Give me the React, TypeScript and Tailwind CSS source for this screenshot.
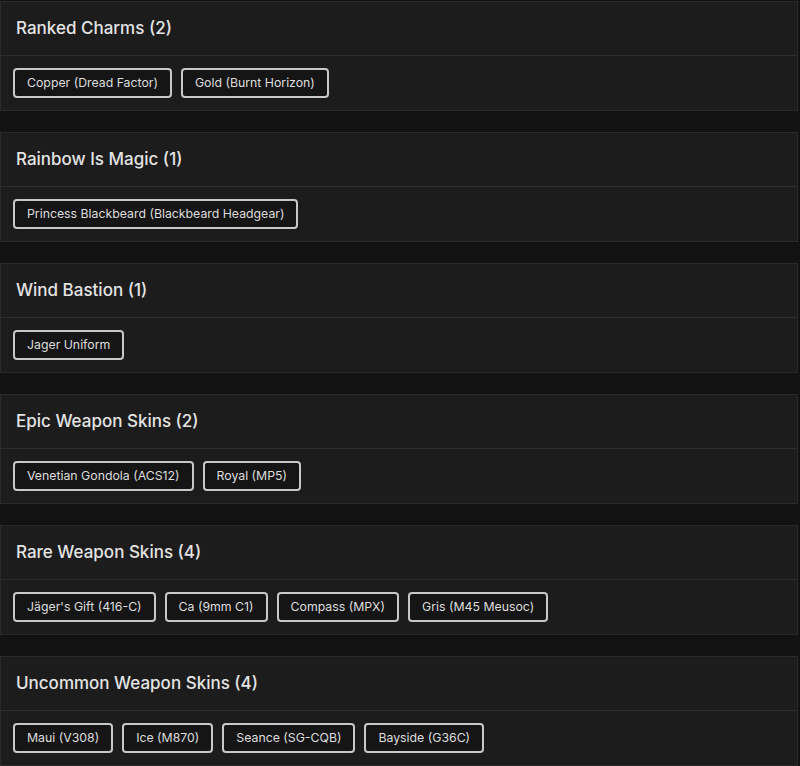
import type { ReactNode } from 'react'

interface Group {
  title: string
  items: string[]
}

const groups: Group[] = [
  { title: 'Ranked Charms', items: ['Copper (Dread Factor)', 'Gold (Burnt Horizon)'] },
  { title: 'Rainbow Is Magic', items: ['Princess Blackbeard (Blackbeard Headgear)'] },
  { title: 'Wind Bastion', items: ['Jager Uniform'] },
  { title: 'Epic Weapon Skins', items: ['Venetian Gondola (ACS12)', 'Royal (MP5)'] },
  { title: 'Rare Weapon Skins', items: ["Jäger's Gift (416-C)", 'Ca (9mm C1)', 'Compass (MPX)', 'Gris (M45 Meusoc)'] },
  { title: 'Uncommon Weapon Skins', items: ['Maui (V308)', 'Ice (M870)', 'Seance (SG-CQB)', 'Bayside (G36C)'] },
]

function Card({ title, children }: { title: string; children: ReactNode }) {
  return (
    <div className="w-[798px] bg-[#1c1c1c] border border-[#2a2a2a]">
      <div className="h-[54px] flex items-center px-[15px] border-b border-[#2e2e2e]">
        <h2 className="text-[17px] font-medium text-[#e4e4e4]">{title}</h2>
      </div>
      <div className="h-[54px] flex items-center gap-[9px] px-[12px]">{children}</div>
    </div>
  )
}

export default function App() {
  return (
    <div
      className="min-h-[766px] bg-[#121212] pt-px flex flex-col gap-[21px]"
      style={{ fontFamily: 'Inter, "Noto Sans", sans-serif' }}
    >
      {groups.map(g => (
        <Card key={g.title} title={`${g.title} (${g.items.length})`}>
          {g.items.map(item => (
            <span
              key={item}
              className="h-[30px] flex items-center px-[12px] rounded-[4px] border-2 border-[#c8c8c8] bg-[#151515] text-[12.3px] text-[#dedede]"
            >
              {item}
            </span>
          ))}
        </Card>
      ))}
    </div>
  )
}
